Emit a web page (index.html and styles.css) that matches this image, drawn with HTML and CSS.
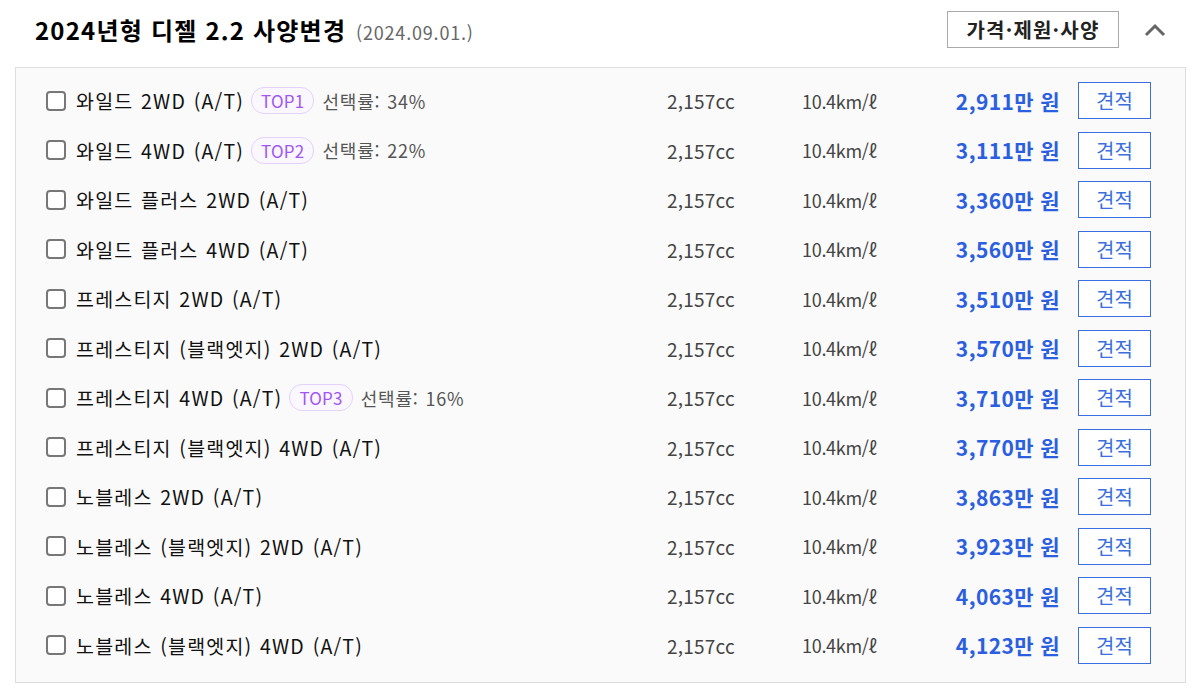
FILE: index.html
```html
<!DOCTYPE html>
<html lang="ko">
<head>
    <meta charset="UTF-8" />
    <meta name="viewport" content="width=device-width, initial-scale=1" />
    <title>2024년형 디젤 2.2 사양변경</title>
    <link rel="stylesheet" href="styles.css">
</head>
<body>
<div class="trim-section">
    <div class="trim-head">
        <h2>2024년형 디젤 2.2 사양변경 <span class="date">(2024.09.01.)</span></h2>
        <button class="spec-btn">가격·제원·사양</button>
        <span class="fold">
            <svg width="22" height="14" viewBox="0 0 22 14"><path d="M2 12 L11 3 L20 12" fill="none" stroke="#666" stroke-width="3"/></svg>
        </span>
    </div>

    <ul class="trim-list" id="list"></ul>
</div>

<script>
    const trims = [
      { name: "와일드 2WD (A/T)", top: 1, rate: 34, price: "2,911" },
      { name: "와일드 4WD (A/T)", top: 2, rate: 22, price: "3,111" },
      { name: "와일드 플러스 2WD (A/T)", price: "3,360" },
      { name: "와일드 플러스 4WD (A/T)", price: "3,560" },
      { name: "프레스티지 2WD (A/T)", price: "3,510" },
      { name: "프레스티지 (블랙엣지) 2WD (A/T)", price: "3,570" },
      { name: "프레스티지 4WD (A/T)", top: 3, rate: 16, price: "3,710" },
      { name: "프레스티지 (블랙엣지) 4WD (A/T)", price: "3,770" },
      { name: "노블레스 2WD (A/T)", price: "3,863" },
      { name: "노블레스 (블랙엣지) 2WD (A/T)", price: "3,923" },
      { name: "노블레스 4WD (A/T)", price: "4,063" },
      { name: "노블레스 (블랙엣지) 4WD (A/T)", price: "4,123" }
    ];

    let rows = "";
    trims.forEach(t => {
      let badge = "";
      if (t.top) {
        badge = `<span class="top">TOP${t.top}</span><span class="rate">선택률: ${t.rate}%</span>`;
      }
      rows += `<li class="trim">
        <label class="name"><span class="check"></span>${t.name}${badge}</label>
        <span class="cc">2,157cc</span>
        <span class="eff">10.4km/ℓ</span>
        <span class="price">${t.price}만 원</span>
        <button class="quote">견적</button>
      </li>`;
    });
    document.getElementById("list").innerHTML = rows;
</script>
</body>
</html>
```

FILE: styles.css
```css
body {
  font-family: "Noto Sans CJK KR", "Noto Sans", sans-serif;
  background: #ffffff;
  margin: 0;
  padding: 0 12px 0 15px;
  color: #111;
}
.trim-head {
  display: flex;
  align-items: center;
  height: 37px;
  padding: 11px 0 0 20px;
  margin-bottom: 19px;
}
.trim-head h2 {
  flex: 1;
  margin: 0;
  font-size: 24px;
  font-weight: bold;
  color: #000;
  letter-spacing: 1.2px;
}
.date {
  font-size: 18px;
  font-weight: normal;
  color: #666;
  letter-spacing: 0.8px;
  margin-left: 2px;
}
.spec-btn {
  height: 37px;
  width: 172px;
  border: 1px solid #aaa;
  background: #fff;
  font-family: inherit;
  font-size: 20px;
  font-weight: bold;
  letter-spacing: 1.2px;
  color: #222;
  padding: 0;
}
.fold {
  display: flex;
  width: 22px;
  margin: 0 20px 0 25px;
}
.trim-list {
  list-style: none;
  margin: 0;
  padding: 8px 0 12px;
  background: #fafafa;
  border: 1px solid #ddd;
}
.trim {
  display: flex;
  align-items: center;
  height: 49.5px;
  padding-left: 30px;
}
.name {
  flex: 1;
  display: flex;
  align-items: center;
  font-size: 19.5px;
  letter-spacing: 1.2px;
  word-spacing: 1px;
  color: #111;
}
.check {
  width: 16px;
  height: 16px;
  border: 2px solid #777;
  border-radius: 4px;
  background: #fff;
  margin-right: 10px;
  flex: none;
}
.top {
  margin-left: 7px;
  height: 25px;
  padding: 0 9px;
  display: inline-flex;
  align-items: center;
  border: 1px solid #e3d2fb;
  background: #fbf7ff;
  border-radius: 13px;
  color: #a155f5;
  font-size: 17px;
  letter-spacing: 0.2px;
}
.rate {
  margin-left: 8px;
  font-size: 18px;
  letter-spacing: 0.8px;
  color: #555;
}
.cc {
  width: 135px;
  font-size: 19px;
  letter-spacing: 0.2px;
  color: #444;
}
.eff {
  width: 100px;
  font-size: 18px;
  letter-spacing: -0.3px;
  color: #444;
}
.price {
  width: 158px;
  text-align: right;
  font-size: 21px;
  font-weight: bold;
  letter-spacing: 0.4px;
  color: #2b5fe0;
}
.quote {
  width: 73px;
  height: 37px;
  margin: 0 34px 0 18px;
  border: 1px solid #3b6fe0;
  background: #fff;
  color: #3b6fe0;
  font-family: inherit;
  font-size: 20px;
  padding: 0;
}
```
